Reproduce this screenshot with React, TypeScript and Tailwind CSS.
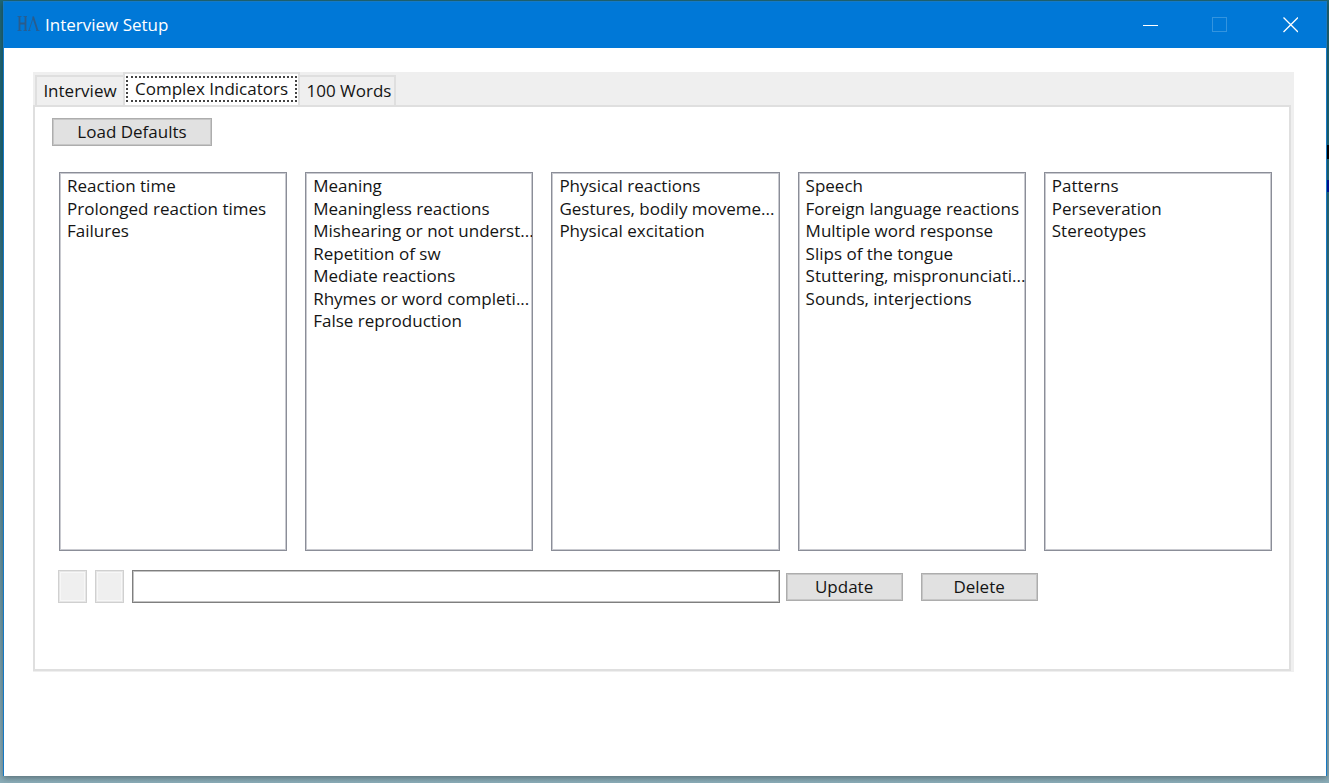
import { useState } from "react";

const lists = [
  { name: "Reaction time", items: ["Reaction time", "Prolonged reaction times", "Failures"] },
  {
    name: "Meaning",
    items: [
      "Meaning",
      "Meaningless reactions",
      "Mishearing or not underst...",
      "Repetition of sw",
      "Mediate reactions",
      "Rhymes or word completi...",
      "False reproduction",
    ],
  },
  {
    name: "Physical reactions",
    items: ["Physical reactions", "Gestures, bodily moveme...", "Physical excitation"],
  },
  {
    name: "Speech",
    items: [
      "Speech",
      "Foreign language reactions",
      "Multiple word response",
      "Slips of the tongue",
      "Stuttering, mispronunciati...",
      "Sounds, interjections",
    ],
  },
  { name: "Patterns", items: ["Patterns", "Perseveration", "Stereotypes"] },
];

function TitleBar() {
  return (
    <header className="flex h-[46px] items-center bg-[#0078d7] pl-3 text-white">
      <svg aria-hidden="true" className="mr-1 h-5 w-6" viewBox="0 0 24 20" fill="none" stroke="#2a5c8c">
        <path d="M3.500 1.500V15.500M9.500 1.500V15.500M3.500 8.500H9.500" strokeWidth="1.800" />
        <path d="M1.500 1.500H5.500M7.500 1.500H11M1.500 15.500H5.500M7.500 15.500H11" strokeWidth=".8" />
        <path d="M13 15.500L17 3M12 15.500H14.500M20 15.500H23.500" strokeWidth=".8" />
        <path d="M17 1.500L21.500 15.500" strokeWidth="1.800" />
      </svg>
      <h1 className="flex-1 pl-px text-[17px] leading-6">Interview Setup</h1>
      <button aria-label="Minimize" className="flex h-full w-[69px] items-center justify-center">
        <svg className="size-4" viewBox="0 0 16 16" stroke="currentColor" shapeRendering="crispEdges">
          <path d="M0 8.500H15" />
        </svg>
      </button>
      <button aria-label="Maximize" disabled className="flex h-full w-[69px] items-center justify-center text-[#3394df]">
        <svg className="size-4" viewBox="0 0 16 16" stroke="currentColor" fill="none" shapeRendering="crispEdges">
          <path d="M.5 .5H14.500V14.500H.5Z" />
        </svg>
      </button>
      <button aria-label="Close" className="flex h-full w-[72px] items-center justify-center">
        <svg className="size-4" viewBox="0 0 16 16" stroke="currentColor" strokeWidth="1.300">
          <path d="M1.500 .5L16 15M16 .5L1.500 15" />
        </svg>
      </button>
    </header>
  );
}

const pushButton =
  "h-7 border border-[#adadad] bg-[#e1e1e1] text-center leading-6 whitespace-nowrap shadow-[inset_0_0_0_1px_#c6c6c6]";

const arrowButton =
  "mr-2 h-[33px] w-[29px] border border-[#d0d0d0] bg-[#efefef] shadow-[inset_0_0_0_1px_#e6e6e6,inset_0_0_0_2px_#f7f7f7]";

export default function App() {
  const [value, setValue] = useState("");

  return (
    <div className="relative flex min-h-screen flex-col bg-linear-to-b from-[#1f6776] from-20% to-[#8badb8] pt-px pr-0.5 pb-[7px] pl-[3px] font-['Open_Sans','Noto_Sans',sans-serif] text-[17px] text-[#141414]">
      <span className="absolute top-[145px] right-0 h-[14px] w-0.5 bg-black" />
      <span className="absolute top-[180px] right-0 h-3 w-0.5 bg-[#00108a]" />
      <div className="flex grow flex-col border-x border-t border-[#1779c4] bg-white shadow-[0_2px_6px_rgba(0,0,0,0.35)]">
        <TitleBar />
        <main className="pt-6 pr-8 pl-[29px]">
          <div className="bg-[#efefef] pr-[3px] pb-px">
            <div role="tablist" className="flex h-[33px] items-end pl-0.5">
              <button
                role="tab"
                aria-selected="false"
                className="h-[30px] w-[88px] border-2 border-r-0 border-b-0 border-[#dfdfdf] leading-7"
              >
                Interview
              </button>
              <button
                role="tab"
                aria-selected="true"
                className="h-[33px] w-[177px] border-2 border-b-0 border-[#dfdfdf] bg-white px-px pb-0.5"
              >
                <span className="block border-2 border-dotted border-[#444444] text-center leading-[22px] whitespace-nowrap">
                  Complex Indicators
                </span>
              </button>
              <button
                role="tab"
                aria-selected="false"
                className="h-[30px] w-24 border-2 border-b-0 border-l-0 border-[#dfdfdf] pl-1 leading-7 whitespace-nowrap"
              >
                100 Words
              </button>
            </div>
            <section
              role="tabpanel"
              aria-label="Complex Indicators"
              className="border-2 border-[#dfdfdf] bg-white pt-[11px] pr-[17px] pb-[66px] pl-[17px]"
            >
              <button className={`${pushButton} w-40`}>Load Defaults</button>
              <div className="mt-[26px] grid grid-cols-5 gap-x-[18px] gap-y-[19px] pl-[7px]">
                {lists.map((list) => (
                  <select
                    key={list.name}
                    size={12}
                    aria-label={list.name}
                    className="h-[379px] w-full appearance-none overflow-hidden border border-[#8b8e98] bg-white p-0 pt-px pl-px shadow-[inset_0_0_0_1px_#c9cad0] outline-none"
                  >
                    {list.items.map((item) => (
                      <option key={item} className="h-[22px] min-h-0 p-0 pl-1.5 whitespace-nowrap odd:h-[23px]">
                        {item}
                      </option>
                    ))}
                  </select>
                ))}
                <div className="col-span-3 -ml-px flex">
                  <button aria-label="Move up" disabled className={arrowButton} />
                  <button aria-label="Move down" disabled className={arrowButton} />
                  <input
                    type="text"
                    aria-label="Indicator"
                    value={value}
                    onChange={(e) => setValue(e.target.value)}
                    className="h-[33px] min-w-0 flex-1 border border-[#7f7f7f] bg-white px-1.5 shadow-[inset_0_0_0_1px_#c4c4c4] outline-none"
                  />
                </div>
                <div className="col-span-2 -ml-3 flex items-center gap-[18px]">
                  <button className={`${pushButton} w-[117px]`}>Update</button>
                  <button className={`${pushButton} w-[117px]`}>Delete</button>
                </div>
              </div>
            </section>
          </div>
        </main>
      </div>
    </div>
  );
}
